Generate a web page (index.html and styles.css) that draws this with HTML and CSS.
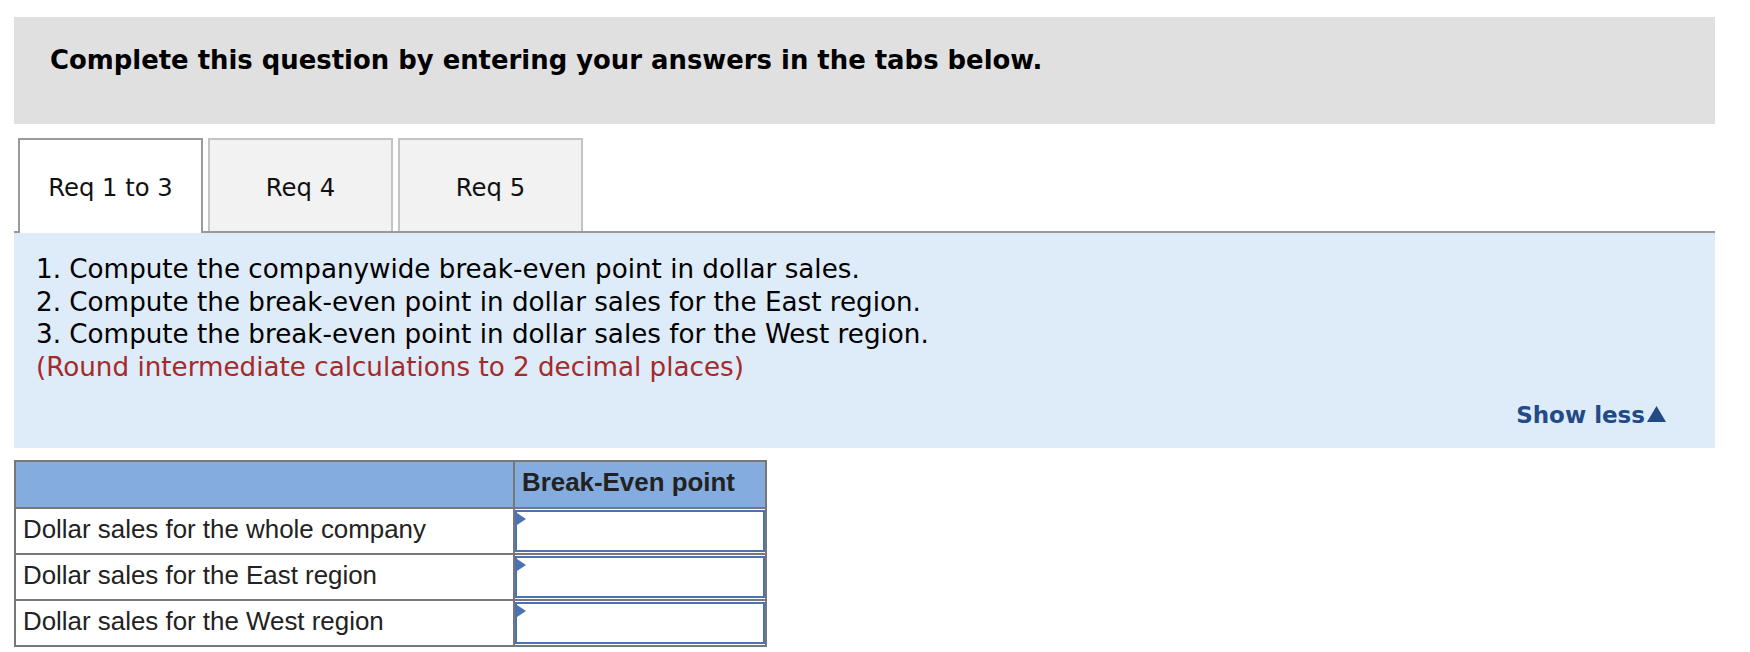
FILE: index.html
```html
<!DOCTYPE html>
<html lang="en">
<head>
<meta charset="utf-8">
<title>Req 1 to 3</title>
<link rel="stylesheet" href="styles.css">
</head>
<body>
<div class="page">
  <div class="instr">Complete this question by entering your answers in the tabs below.</div>

  <div class="tabs">
    <div class="tab active">Req 1 to 3</div>
    <div class="tab">Req 4</div>
    <div class="tab">Req 5</div>
  </div>

  <div class="panel">
    <div class="lines">
      <div>1. Compute the companywide break-even point in dollar sales.</div>
      <div>2. Compute the break-even point in dollar sales for the East region.</div>
      <div>3. Compute the break-even point in dollar sales for the West region.</div>
      <div class="note">(Round intermediate calculations to 2 decimal places)</div>
    </div>
    <div class="showless">Show less<svg class="tri" width="19" height="16" viewBox="0 0 19 16" aria-hidden="true"><polygon points="9.5,0 19,16 0,16" fill="#234a85"/></svg></div>
  </div>

  <table class="grid">
    <tr class="head">
      <th class="label"></th>
      <th class="value">Break-Even point</th>
    </tr>
    <tr>
      <td class="label">Dollar sales for the whole company</td>
      <td class="value"><div class="input"></div></td>
    </tr>
    <tr>
      <td class="label">Dollar sales for the East region</td>
      <td class="value"><div class="input"></div></td>
    </tr>
    <tr>
      <td class="label">Dollar sales for the West region</td>
      <td class="value"><div class="input"></div></td>
    </tr>
  </table>
</div>
</body>
</html>
```

FILE: styles.css
```css
* { box-sizing: border-box; }

html, body {
  margin: 0;
  padding: 0;
  background: #ffffff;
}

.page {
  width: 1715px;
  padding: 17px 0 0 14px;
  font-family: "DejaVu Sans", Verdana, sans-serif;
  color: #000;
}

.instr {
  height: 107px;
  background: #e0e0e0;
  display: flex;
  align-items: center;
  padding: 0 0 21px 36px;
  font-size: 25.9px;
  font-weight: bold;
}

.tabs {
  margin-top: 14px;
  display: flex;
  gap: 5px;
  padding-left: 4px;
  border-bottom: 2px solid #999999;
  height: 95px;
}

.tab {
  width: 185px;
  height: 93px;
  background: #f2f2f2;
  border: 2px solid #c4c4c4;
  border-bottom: none;
  display: flex;
  align-items: center;
  justify-content: center;
  padding-top: 4px;
  font-size: 24.3px;
  color: #111;
}

.tab.active {
  background: #ffffff;
  border-color: #999999;
  height: 95px;
  margin-bottom: -2px;
  padding-top: 2px;
}

.panel {
  background: #deebf8;
  padding: 20px 49px 20px 22px;
  display: flex;
  flex-direction: column;
}

.lines {
  font-size: 26.2px;
  line-height: 32.5px;
  color: #000;
}

.note {
  color: #a52a2a;
}

.showless {
  align-self: flex-end;
  margin-top: 19px;
  font-size: 23px;
  line-height: 26px;
  font-weight: bold;
  color: #234a85;
  display: flex;
  align-items: center;
}

.tri {
  margin-left: 2px;
  margin-top: -2px;
}

.grid {
  margin-top: 12px;
  border-collapse: collapse;
  width: 753px;
  font-family: "Liberation Sans", Arial, sans-serif;
  font-size: 25.9px;
  color: #222;
}

.grid th,
.grid td {
  border: 2px solid #777777;
  padding: 0;
  height: 46px;
  text-align: left;
}

.grid .label {
  width: 499px;
  padding: 0 0 4px 7px;
}

.grid .head th {
  background: #84acdf;
  font-weight: bold;
  height: 47px;
  padding-bottom: 4px;
}

.grid th.value {
  padding-left: 7px;
}

.grid td.value {
  padding: 1px 0 0 0;
  vertical-align: top;
}

.input {
  position: relative;
  height: 42px;
  border: 2px solid #4a72b4;
  background: #fff;
}

.input::before {
  content: "";
  position: absolute;
  left: 0;
  top: 1px;
  border-top: 6px solid transparent;
  border-bottom: 6px solid transparent;
  border-left: 9px solid #4a72b4;
}
```
